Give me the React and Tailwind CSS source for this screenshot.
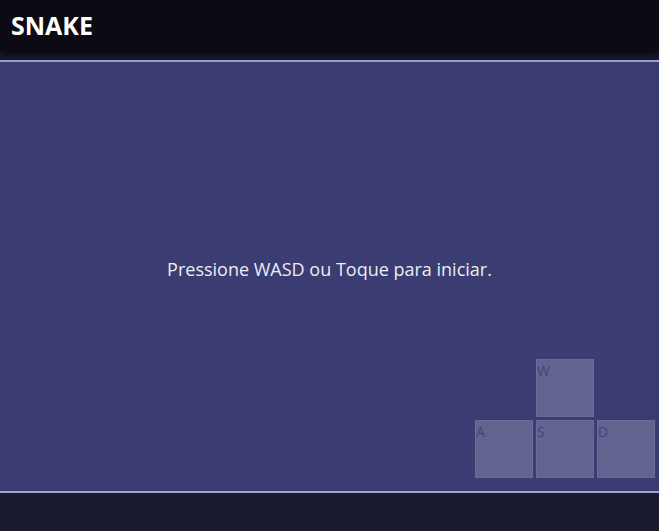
export default function App() {
  const Key = ({ k }) => (
    <div className="w-[58px] h-[58px] bg-[#62638f] border border-[#6b6c9a] text-[#42437a] text-[14px] leading-none pt-[4px]">
      {k}
    </div>
  );
  return (
    <div className="h-[531px] w-full flex flex-col bg-[#1a1a30] overflow-hidden" style={{ fontFamily: "'Open Sans', Lato, sans-serif" }}>
      <header className="h-[52px] shrink-0 bg-[#0c0a12] flex items-center px-[11px] shadow-[0_4px_6px_rgba(0,0,0,0.6)] relative z-10">
        <h1 className="text-white text-[25px] font-bold">SNAKE</h1>
      </header>
      <div className="h-[8px] shrink-0 bg-[#1c1b34]" />
      <main className="relative h-[433px] shrink-0 bg-[#3a3c72] border-y-2 border-[#a3a3c8] flex items-center justify-center">
        <p className="text-[#ececf5] text-[18px] mb-[14px]">Pressione WASD ou Toque para iniciar.</p>
        <div className="absolute right-[4px] bottom-[13px] grid grid-cols-3 gap-[3px]">
          <div />
          <Key k="W" />
          <div />
          <Key k="A" />
          <Key k="S" />
          <Key k="D" />
        </div>
      </main>
      <footer className="flex-1 bg-[#1a1a30]" />
    </div>
  );
}
